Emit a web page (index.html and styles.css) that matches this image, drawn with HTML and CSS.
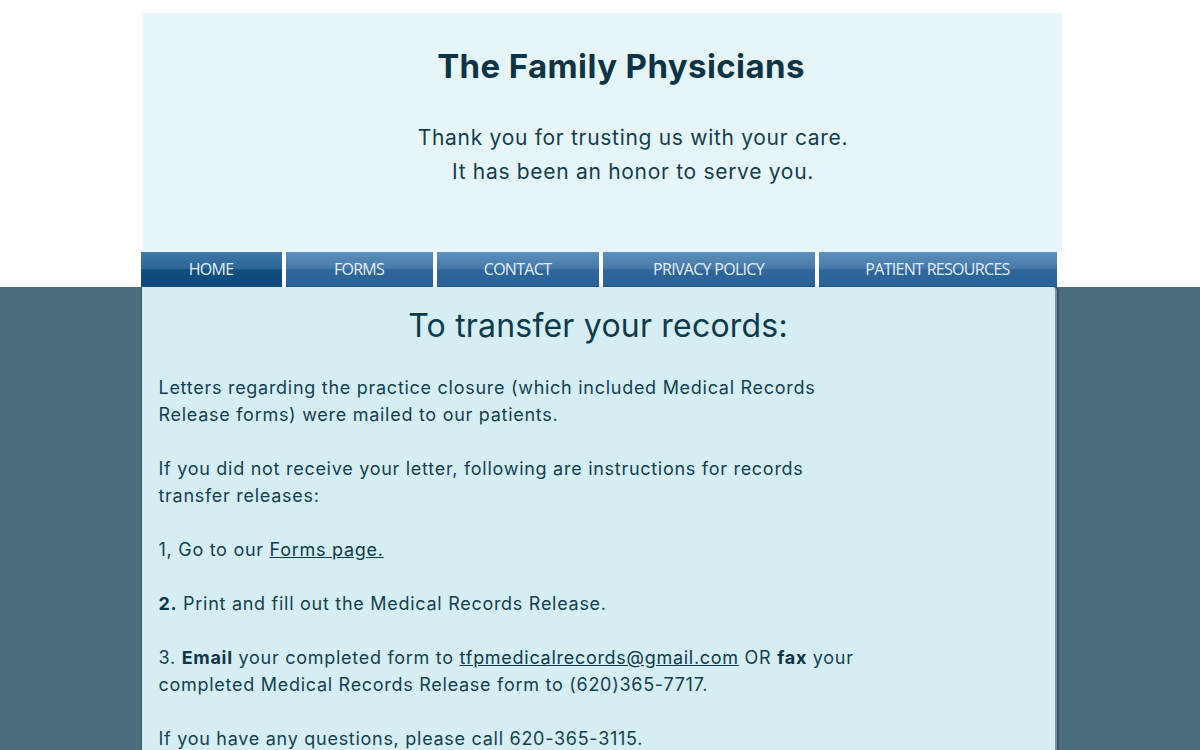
FILE: index.html
```html
<!DOCTYPE html>
<html>
<head>
<meta charset="utf-8">
<link rel="stylesheet" href="styles.css">
</head>
<body>
<div class="page">
  <header class="header">
    <h1 class="title">The Family Physicians</h1>
    <p class="tagline">Thank you for trusting us with your care.<br>It has been an honor to serve you.</p>
  </header>
  <nav class="nav">
    <a class="nav-item active w-home">HOME</a>
    <a class="nav-item w-forms">FORMS</a>
    <a class="nav-item w-contact">CONTACT</a>
    <a class="nav-item w-privacy">PRIVACY POLICY</a>
    <a class="nav-item w-patient">PATIENT RESOURCES</a>
  </nav>
  <main class="content">
    <h2 class="heading">To transfer your records:</h2>
    <div class="text">
      <p>Letters regarding the practice closure (which included Medical Records Release forms) were mailed to our patients.</p>
      <p>If you did not receive your letter, following are instructions for records transfer releases:</p>
      <p>1, Go to our <a class="link">Forms page.</a></p>
      <p><b>2.</b> Print and fill out the Medical Records Release.</p>
      <p>3. <b>Email</b> your completed form to <a class="link">tfpmedicalrecords@gmail.com</a> OR <b>fax</b> your completed Medical Records Release form to (620)365-7717.</p>
      <p>If you have any questions, please call 620-365-3115.</p>
    </div>
  </main>
</div>
</body>
</html>
```
FILE: styles.css
```css
html, body {
  margin: 0;
  padding: 0;
}
body {
  background: linear-gradient(to bottom, #ffffff 0, #ffffff 287px, #4c6d7d 287px, #4c6d7d 100%);
  min-height: 750px;
  font-family: Inter, "Liberation Sans", sans-serif;
  color: #123e4e;
}
.page {
  width: 921px;
  margin: 0 auto;
  padding-top: 13px;
  position: relative;
  left: 1px;
}
.header {
  margin-left: 2px;
  width: 919px;
  height: 239px;
  background: #e6f5f8;
  text-align: center;
  padding-top: 1px;
  box-sizing: border-box;
}
.title {
  margin: 31px 0 0 0;
  padding-left: 38px;
  font-size: 33px;
  font-weight: 700;
  color: #0c3446;
  letter-spacing: 0.4px;
  line-height: 42px;
}
.tagline {
  margin: 34px 0 0 0;
  padding-left: 62px;
  font-size: 21px;
  line-height: 34px;
  letter-spacing: 0.7px;
  color: #123e4e;
}
.nav {
  display: flex;
  gap: 4px;
  width: 916px;
  height: 35px;
}
.nav-item {
  display: flex;
  align-items: center;
  justify-content: center;
  font-family: "Open Sans", "Liberation Sans", sans-serif;
  font-size: 16px;
  letter-spacing: -0.7px;
  color: #e4f0f7;
  background: linear-gradient(to bottom, #5e90bd 0%, #4478a8 50%, #2f669b 52%, #2b6398 100%);
  border-bottom: 1px solid #20517e;
  box-sizing: border-box;
  padding-bottom: 1px;
}
.nav-item.active {
  background: linear-gradient(to bottom, #4079a8 0%, #2a6596 50%, #104e80 52%, #0d4a7b 100%);
}
.w-home { width: 141px; }
.w-forms { width: 147px; }
.w-contact { width: 162px; }
.w-privacy { width: 212px; }
.w-patient { flex: 1; }
.content {
  width: 916px;
  min-height: 470px;
  background: #d4eef3;
  border-left: 1px solid #3e5866;
  border-right: 2px solid #7d8f98;
  box-shadow: 2px 0 0 #3d5663;
  box-sizing: border-box;
  border-radius: 0 4px 0 0;
  padding: 8px 0 0 17px;
}
.heading {
  margin: 11px 0 0 0;
  text-align: center;
  font-size: 32px;
  font-weight: 400;
  color: #0f3a4b;
  line-height: 40px;
  padding-right: 17px;
  letter-spacing: 0.2px;
}
.text {
  margin-top: 28px;
  width: 705px;
  font-size: 18px;
  line-height: 27px;
  letter-spacing: 0.72px;
  color: #143f50;
}
.text p {
  margin: 0 0 27px 0;
}
.text b {
  font-weight: 700;
  color: #0e3546;
}
.link {
  color: #0f3a4b;
  text-decoration: underline;
}
```
